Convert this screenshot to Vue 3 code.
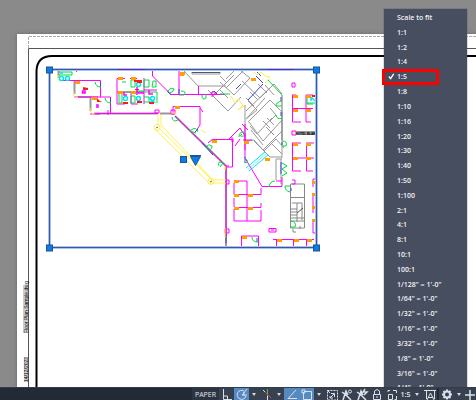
<script setup>
import { ref } from 'vue'

const scales = [
  'Scale to fit', '1:1', '1:2', '1:4', '1:5', '1:8', '1:10', '1:16', '1:20', '1:30',
  '1:40', '1:50', '1:100', '2:1', '4:1', '8:1', '10:1', '100:1',
  '1/128" = 1\'-0"', '1/64" = 1\'-0"', '1/32" = 1\'-0"', '1/16" = 1\'-0"',
  '3/32" = 1\'-0"', '1/8" = 1\'-0"', '3/16" = 1\'-0"', '1/4" = 1\'-0"'
]
const current = ref('1:5')

const grips = [[49.5, 70], [316.5, 70], [49.5, 248], [316.5, 248]]
const orange = [
  [75, 81], [92, 97], [118, 77], [131, 77], [118, 91], [131, 91], [180, 72], [251, 78],
  [293, 95], [306, 95], [293, 109], [306, 109], [175, 106], [212, 140], [244, 141], [265, 158],
  [234, 180], [293, 143], [306, 143], [293, 157], [306, 157], [234, 194], [248, 194],
  [234, 207], [248, 207], [242, 236], [277, 239], [294, 239], [307, 239],
  [312, 181], [312, 193], [312, 206], [312, 219]
]
</script>

<template>
  <div class="app">
    <main class="canvas">
      <div class="paper"></div>
      <svg class="drawing" role="img" aria-label="Floor plan layout">
        <g fill="none">
          <path d="M28.500 48V36.500H3000" stroke="#aaa" stroke-dasharray="3 1" />
          <path d="M28.500 3000V48.500H3000" stroke="#555" />
          <path d="M36.500 3000V71Q37 56 52 56H3000" stroke="#000" stroke-width="2" />
        </g>
        <g class="margin-text">
          <rect x="23" y="285" width="5" height="48" />
          <rect x="24" y="358" width="4" height="24" />
          <text transform="translate(27.500 333) rotate(-90)">Floor Plan Sample.dwg</text>
          <text transform="translate(27.500 382) rotate(-90)">14/12/2023</text>
        </g>

        <g fill="none" stroke="#999">
          <path d="M58.500 71V78M74.500 81V94M78 97H90.500M90.500 98V111M94 113.500H158M160 113.500H172M175 116L226 166V248" stroke-width="2" />
          <path d="M184 71L198 86H226M192 72V74H220V72M214 95L234 75M208 90L214 96M211 94L228 111L241 97M228 98L220 90M226 79L235 70" />
          <path d="M220 82L234 95L250 78L240 70M226 88L244 70M220 76L227 83M242 81L260 98L274 84M246 111L274 84L282 94M246 98L254 106M250 92L258 100M258 84L267 93M265 85L274 95M248 101L257 110L246 119M246 119L265 98" />
          <path d="M245 105V141M248 122L270 100L282 112V158M249 122L263 141L282 120M250 126L257 134L272 118M270 108L276 115L270 121M266 127L274 135M245 141L254 140L263 150L282 131M251 130L263 145M264 151L276 139L284 148M271 143L282 154M254 141L270 157H282M276 159V180M281 159V184M276 159H282M263 121L270 128M267 118L274 125" />
          <path d="M290.500 184V228H304.500V184ZM290 197.500H304M290 209H297M290 212H297M290 215H297M290 218H304M290 221H304M297 203V222M292 203H302V220M293 229V232H296M300 229V226" stroke="#888" />
          <path d="M192 72.500H220" stroke="#556" />
          <path d="M282 95V140" stroke="#777" />
        </g>

        <g fill="none" stroke="#ff00ff">
          <path d="M61 80.500H100.500V97M74 97H110.500V113M108 110V115M80 80.500H73M90 97H98M76.500 71V72M90 114H100M94 113.500H158M117 104V78.500H125M117 92H144M130 78.500H137M144 78V104M117 104H125M131 92V104H138M144 90H157" />
          <path d="M152.500 71V76L171 94.500H225M179 70V94M198.500 86V95M173 115V106.500H200V125L196 131M155 110H159V113H155ZM171 110H175V114H171ZM210 95L213 91L216 95M203 112L200 108M212 92V97" />
          <path d="M175 116L226 166M213 139.500H232.500V167H226M232 137V142M225 166H229M226 168V236M226 180H229V184H226ZM225 229H229V233H225ZM208 143L213 139M245 124V158L262 186.500H282V177M276 181H282M242 124L248 130M243 140H252M245 133V150" />
          <path d="M292 83H295V87H292ZM292.500 95V122H301M292 108.500H313M306 95V122H311M306 95H313M292 95H296M292 131H296V135H292ZM292.500 143V171H301M292 158H314M306.500 143V171H313M292 143H301M306 143H314M292 180H295V184H292" />
          <path d="M234 181H247V221H234V209M234 183V194.500H261V188M234 207.500H261V203M234 198V207M247 221H261V210M269 228.500H276V232H269ZM271 230H274M241.500 248V236H258.500V248M273 239.500H314M276.500 240V248M293.500 240V248M306.500 240V248M313 179H316M313 179V187M313 194V213M313 220V233H316" />
          <path d="M229 139L240 128L245 136M240 139L235 146M233 139V142" />
        </g>

        <g fill="none" stroke="#4040dd">
          <path d="M100.500 82V88M110.500 98V105M167 91L171 95M202 143L213 155M198 129L194 133M236 89L241 84M248 100L263 84M256 76L263 83M281 97V101M281 112V116M257 72L261 76M282 142V145M245 157V163M291 188V191M226 234V243M257 238V242M281 162V174M179 89V94" />
        </g>

        <g fill="none" stroke="#fff04e">
          <path d="M58 75V79Q59 82 62 81M74 92Q72 98 78 98M90 108Q90 114 95 114M158 115V125M161 115V125L211 178M155 129L209 183H226M159 128L212 180H226" />
          <path d="M254 72L257 75L261 72L265 76L270 77L265 83M231 96L235 103L238 99L243 105L238 110L244 106M225 166V170M225 228V238M171 113H176M201 130L206 133" />
          <circle cx="157" cy="127.500" r="3" /><circle cx="211" cy="181.500" r="3" />
        </g>
        <path d="M156 128L158 127M210 182L212 181" stroke="#666" fill="none" />

        <g fill="none" stroke="#00dc3c">
          <path d="M59 72H72V75H59M95 82Q96 87 101 87M105 98Q106 103 111 103M119 92H122V103H119ZM131 80H135V87H131ZM131 96H135V103H131ZM118 92H157V103M144 80H149V87H144ZM144 97H149V102H144M153 81H156V87H152ZM122 82H126M136 91H144" />
          <path d="M168 92Q169 87 174 89Q173 93 169 93M181 91Q187 91 184 95H179M202 95Q202 101 206 98V94M172 117Q173 123 178 120M191 130Q196 126 198 132M190 131L196 133M207 148Q207 143 212 146Q212 152 207 148M219 166Q217 160 223 163L220 167M242 134Q238 137 244 136M239 137Q239 131 245 132M245 158Q250 162 245 163" />
          <path d="M268 80L282 95M282 101Q276 102 276 106H282M276 115Q277 120 282 118M282 141Q288 141 286 146H282M282 163L287 166L282 169L287 173L282 176M269 187Q270 181 275 181M290 186H285Q285 191 290 192M291 221Q297 222 295 227H290M252 237Q252 242 258 242M307 97V104H313M307 103H315M220 94H230" />
        </g>

        <g fill="none" stroke="#00e4ef" stroke-width="1.500">
          <circle cx="61.500" cy="78.500" r="2" /><circle cx="67.500" cy="78.500" r="2" />
          <circle cx="125.500" cy="98.500" r="2" /><circle cx="138.500" cy="84.500" r="2" />
          <circle cx="138.500" cy="98.500" r="2" /><circle cx="152.500" cy="98.500" r="2" />
          <path d="M60 73H63M149 98L154 102H150M311 97L315 101M311 101V98" />
          <path d="M246 168L265 152M249 171L268 155" stroke-width="1" />
          <path d="M247.500 169.500L266.500 153.500" stroke-width="1" stroke-opacity="0.500" />
        </g>
        <g fill="#ff1a1a">
          <path d="M83 87L88 88V90H83ZM97 98L100 101L102 102H97ZM123 102H128V104H123ZM134 80H139V82H134ZM137 101H142V103H137ZM135 89H139V90H135ZM149 102H154V104H149ZM137 80H142V83H137ZM312 95H315V97H312Z" />
        </g>
        <g fill="none" stroke="#ff00ff" stroke-width="1.500">
          <path d="M82.500 91H85V93H82.500ZM96 105H98V107H96M124 92V95H127M137 87V95M138 93H144M149 90V94H153" />
        </g>
        <rect v-for="(o, i) in orange" :key="i" :x="o[0]" :y="o[1]" width="5" height="3" fill="#ffa000" />
        <rect x="180" y="72" width="4" height="4" fill="#ffa000" />
        <path d="M214 91L217 94M303 208L297 213" stroke="#555" />
        <rect x="296" y="131" width="20" height="4" fill="#999" />
        <text class="room-label" x="296" y="135">HOTEL BLANK</text>

        <rect x="49.500" y="69.500" width="267" height="178" fill="none" stroke="#a9c2f5" stroke-width="3" />
        <rect x="49.500" y="69.500" width="267" height="178" fill="none" stroke="#3d5796" />
        <path d="M118 69.500H145M268 69.500H294" stroke="#6a1fa8" />
        <g fill="#087eee" stroke="#21548a">
          <rect v-for="(g, i) in grips" :key="i" :x="g[0] - 3" :y="g[1] - 3" width="6" height="6" />
          <rect x="180.500" y="156.500" width="6" height="6" />
          <path d="M190.500 156.500H200.500L195.500 165.500ZM190 155.500H201" />
        </g>
      </svg>

      <div class="menu">
        <ul class="scale-list">
          <li v-for="s in scales" :key="s">
            <button type="button" :class="{ selected: current === s }" @click="current = s">
              <svg v-if="current === s" class="check" viewBox="0 0 8 8" aria-hidden="true">
                <path d="M1 4L3 6.500L6.500 1" />
              </svg>
              {{ s }}
            </button>
          </li>
        </ul>
      </div>
    </main>

    <footer class="status">
      <button type="button" class="space">PAPER</button>
      <div class="tools">
        <button type="button" class="tool" aria-label="Ortho mode">
          <svg viewBox="0 0 14 13"><path d="M3.500 1V11.500H12M4 8H7.500V11" /></svg>
        </button>
        <button type="button" class="tool on" aria-label="Polar tracking">
          <svg viewBox="0 0 14 13"><path d="M9 3A4.500 4.500 0 1 0 11 8M7 7H12M7 7L12 1M9 4L9 8" /></svg>
        </button>
        <button type="button" class="arrow" aria-label="Polar options"></button>
        <button type="button" class="tool" aria-label="Isometric drafting">
          <svg viewBox="0 0 14 13"><path d="M7.500 1V8" stroke="#62a65b" /><path d="M3 2L11 10" stroke="#b84d57" /><path d="M7.500 8V12M3 2L5 4" /></svg>
        </button>
        <button type="button" class="arrow" aria-label="Isometric options"></button>
        <button type="button" class="tool on" aria-label="Object snap tracking">
          <svg viewBox="0 0 14 13"><path d="M11 2L3 10.500H12" /></svg>
        </button>
        <button type="button" class="tool on" aria-label="Object snap">
          <svg viewBox="0 0 14 13"><path d="M4 3.500H11.500V11.500H3.500V4M2 2H5V5H2Z" /></svg>
        </button>
        <button type="button" class="arrow" aria-label="Snap options"></button>
        <button type="button" class="tool" aria-label="Selection cycling">
          <svg viewBox="0 0 14 13"><path d="M2.500 2.500H12.500V12H2.500Z" stroke-dasharray="2 1" /><path d="M5 10L9 6M6 5.500H9.500V9M2 2L5 5M5 8V10H8" /></svg>
        </button>
        <button type="button" class="tool" aria-label="Annotation visibility">
          <svg viewBox="0 0 14 13"><path d="M3 12L6 3L8 7M2 4L6 7L11 12M6 3V8" stroke-width="1.500" /><circle cx="10" cy="3.500" r="1.500" /></svg>
        </button>
        <button type="button" class="tool" aria-label="Auto scale">
          <svg viewBox="0 0 14 13"><path d="M3 12L6 3L8 7M2 4L6 7L11 12M6 3V8M10 1L8 4H12L9 7" stroke-width="1.500" /></svg>
        </button>
        <button type="button" class="tool" aria-label="Viewport lock">
          <svg viewBox="0 0 14 13"><path d="M4.500 6V3Q7 0 9.500 3V6M3.500 6.500H10.500V11.500H3.500ZM7 8V10" /></svg>
        </button>
        <button type="button" class="tool" aria-label="Viewport scale sync">
          <svg viewBox="0 0 14 13"><path d="M3.500 6.500H7.500V11.500H3.500ZM3 4V2.500H5M8 2.500H11.500V5M11.500 8V11.500H9.500" /></svg>
        </button>
        <button type="button" class="scale">{{ current }}</button>
        <button type="button" class="arrow" aria-label="Viewport scale"></button>
        <button type="button" class="tool" aria-label="Annotation monitor">
          <svg viewBox="0 0 14 13"><path d="M2 2.500H12M3.500 3V11M11.500 3V11M4 12L7.500 5L11 12M5 9.500H10M1 2.500H4M10 2.500H13" /></svg>
        </button>
      </div>
      <div class="tools end">
        <button type="button" class="tool" aria-label="Workspace">
          <svg viewBox="0 0 14 13"><circle cx="7" cy="6.500" r="3" stroke-width="2" /><path d="M7 1.500V3M7 10V11.500M2 6.500H3.500M10.500 6.500H12M3.500 3L4.500 4M9.500 9L10.500 10M10.500 3L9.500 4M4.500 9L3.500 10" stroke-width="2" /></svg>
        </button>
        <button type="button" class="arrow" aria-label="Workspace options"></button>
        <button type="button" class="tool last" aria-label="Add">
          <svg viewBox="0 0 14 13"><path d="M7 2V12M2 7H12" stroke-width="1.500" /></svg>
        </button>
      </div>
    </footer>
  </div>
</template>

<style>
body {
  margin: 0;
}
</style>

<style scoped>
.app {
  display: flex;
  flex-direction: column;
  height: 100vh;
  overflow: hidden;
  font-family: "Open Sans", "Noto Sans", sans-serif;
}
button {
  margin: 0;
  padding: 0;
  border: 0;
  background: none;
  color: inherit;
  font: inherit;
}
.canvas {
  position: relative;
  flex: 1;
  min-height: 0;
  display: flex;
  padding: 34px 0 0 17px;
  background: #8a8a8a;
  overflow: hidden;
}
.paper {
  flex: 1;
  background: #fff;
  box-shadow: 0 0 4px #686868;
}
.drawing {
  position: absolute;
  inset: 0;
  width: 100%;
  height: 100%;
}
.margin-text rect {
  fill: #ccc;
}
.margin-text text {
  font: 400 5px "Liberation Sans", sans-serif;
  fill: #000;
}
.room-label {
  font: 700 3px "Liberation Sans", sans-serif;
  fill: #000;
}
.menu {
  position: absolute;
  top: 9px;
  right: 9px;
  bottom: 0;
  width: 83px;
  box-sizing: border-box;
  padding-top: 1px;
  background: #464e60;
  box-shadow: 0 0 1px #333a47;
}
.scale-list {
  display: flex;
  flex-direction: column;
  height: 385px;
  margin: 0;
  padding: 0;
  list-style: none;
}
.scale-list li {
  flex: 1;
  min-height: 0;
  display: flex;
}
.scale-list button {
  position: relative;
  flex: 1;
  padding: 1px 0 0 13px;
  color: #f2f3f5;
  font-size: 7px;
  font-weight: 600;
  line-height: 14px;
  text-align: left;
  white-space: nowrap;
}
.scale-list .selected::after {
  content: "";
  position: absolute;
  inset: 0 28px -1px -2px;
  border: 3px solid #f00;
}
.check {
  position: absolute;
  left: 4px;
  top: 4px;
  width: 7px;
  height: 7px;
  fill: none;
  stroke: #fff;
  stroke-width: 1.5px;
}
.status {
  display: flex;
  justify-content: flex-end;
  height: 13px;
  background: #222a35;
  color: #e5e8ed;
  border-top: 1px solid #343c49;
  box-sizing: border-box;
}
.space {
  padding: 0 3px;
  background: #2d3441;
  font-size: 7px;
  line-height: 14px;
}
.tools {
  display: flex;
  align-items: stretch;
  background: #384150;
}
.tools.end {
  margin-left: 2px;
}
.tool {
  width: 15px;
  display: flex;
  justify-content: center;
}
.tool.last {
  width: 12px;
}
.tool.on {
  background: #5589c2;
}
.tool svg {
  flex: none;
  width: 14px;
  height: 13px;
  fill: none;
  stroke: #dce0e6;
}
.arrow {
  width: 10px;
  display: flex;
  align-items: center;
  justify-content: center;
}
.arrow::before {
  content: "";
  border: 2px solid transparent;
  border-top: 3px solid #d5d9df;
  border-bottom: 0;
}
.scale {
  width: 13px;
  font-size: 7px;
  font-weight: 600;
  line-height: 14px;
}
</style>
